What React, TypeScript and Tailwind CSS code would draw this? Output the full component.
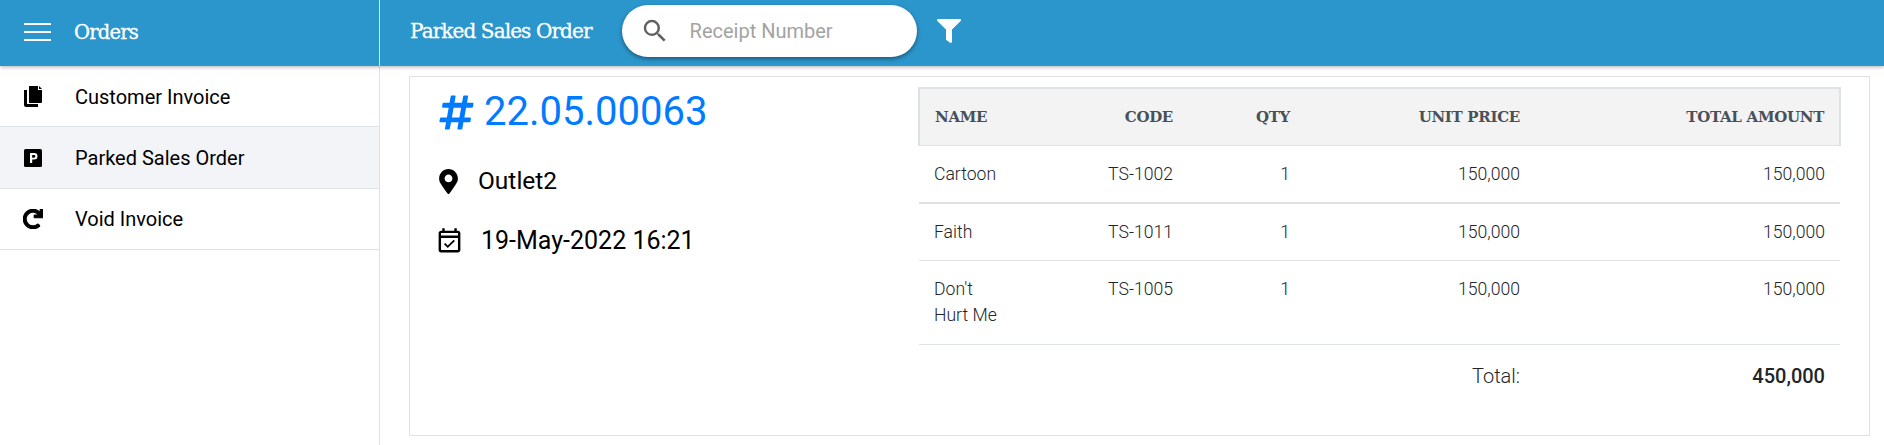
import { FaFilter, FaHashtag, FaMapMarkerAlt, FaRedo } from "react-icons/fa";
import { MdOutlineEventAvailable, MdSearch } from "react-icons/md";

const SLAB = "font-['DejaVu_Serif',serif]";

const CopyIcon = () => (
  <svg width="18" height="21" viewBox="0 0 18 21" fill="currentColor">
    <path d="M0 4h3v14h11v3H2a2 2 0 0 1-2-2z" />
    <path d="M5 0h9v4h4v12a1 1 0 0 1-1 1H5z" />
    <path d="M15 0l3 3h-3z" />
  </svg>
);

const ParkingIcon = () => (
  <svg width="18" height="18" viewBox="0 0 18 18">
    <rect width="18" height="18" rx="1.5" fill="currentColor" />
    <path d="M6 4h4.2a3.2 3.2 0 0 1 0 6.6H8.2V14H6zM8.2 6v2.7h1.8a1.35 1.35 0 0 0 0-2.7z" fill="#fff" fillRule="evenodd" />
  </svg>
);

const navItems = [
  { label: "Customer Invoice", icon: <CopyIcon />, height: "h-[61px] pt-[1px]", active: false },
  { label: "Parked Sales Order", icon: <ParkingIcon />, height: "h-[62px]", active: true },
  { label: "Void Invoice", icon: <FaRedo size={20} className="[stroke-width:30]" />, height: "h-[61px]", active: false },
];

const rows = [
  { name: "Cartoon", code: "TS-1002", border: "border-b-2" },
  { name: "Faith", code: "TS-1011", border: "border-b" },
  { name: "Don't Hurt Me", code: "TS-1005", border: "border-b h-[84px]" },
];

const headCell = "px-[15px] py-0 text-right font-bold";
const bodyCell = "px-[15px] pt-[15px] pb-[15px] align-top";

const App = () => {
  return (
    <div className="h-[445px] w-[1884px] overflow-hidden bg-white font-['Roboto',sans-serif]">
      <header className="relative z-10 flex h-[66px] bg-[#2b96cc] text-white shadow-[0_1px_4px_rgba(0,0,0,0.3)]">
        <div className="flex w-[380px] items-center border-r border-[#d9e6ee]">
          <div className="-mt-[2px] ml-[24px] flex w-[27px] flex-col gap-[6px]">
            <span className="h-[2px] bg-white" />
            <span className="h-[2px] bg-white" />
            <span className="h-[2px] bg-white" />
          </div>
          <span className={`ml-[23px] text-[19.5px] tracking-[-0.8px] [-webkit-text-stroke:0.3px] ${SLAB}`}>Orders</span>
        </div>
        <div className="flex items-center pb-[4px]">
          <span className={`ml-[30px] text-[20px] tracking-[-0.9px] [-webkit-text-stroke:0.3px] ${SLAB}`}>Parked Sales Order</span>
          <div className="ml-[30px] flex h-[52px] w-[295px] items-center rounded-full bg-white shadow-[0_2px_4px_rgba(0,0,0,0.4)]">
            <MdSearch size={30} className="ml-[18px] text-[#616161]" />
            <span className="ml-[20px] text-[20px] text-[#a3a3a3]">Receipt Number</span>
          </div>
          <FaFilter size={24} className="ml-[20px]" />
        </div>
      </header>

      <div className="flex h-[379px]">
        <aside className="w-[380px] shrink-0 border-r border-[#dee2e6]">
          {navItems.map((item) => (
            <div
              key={item.label}
              className={`flex ${item.height} items-center border-b border-[#dee2e6] text-[20px] text-black ${
                item.active ? "bg-[#f3f4f8]" : "bg-white"
              }`}
            >
              <span className="ml-[21px] flex w-[24px] justify-center">{item.icon}</span>
              <span className="ml-[30px]">{item.label}</span>
            </div>
          ))}
        </aside>

        <main className="flex-1 pt-[10px] pl-[29px] pr-[15px]">
          <div className="flex h-[360px] border border-[#dee2e6] pl-[28px] pr-[28px]">
            <div className="w-[480px] shrink-0">
              <div className="mt-[5px] flex items-center text-[40px] leading-[60px] text-[#007bff]">
                <FaHashtag size={39} className="-ml-[1px]" />
                <span className="ml-[8px]">22.05.00063</span>
              </div>
              <div className="mt-[21px] flex items-center text-[24.5px] leading-[36px] text-black">
                <FaMapMarkerAlt size={25} className="-ml-[2px]" />
                <span className="ml-[17px]">Outlet2</span>
              </div>
              <div className="mt-[24px] flex items-center text-[25px] leading-[36px] text-black">
                <MdOutlineEventAvailable size={29} className="-ml-[3px]" />
                <span className="ml-[17px]">19-May-2022 16:21</span>
              </div>
            </div>

            <table className="mt-[10px] h-fit w-[921px] table-fixed border-collapse text-[17.6px] leading-[26px] font-light text-[#212529]">
              <colgroup>
                <col className="w-[100px]" />
                <col className="w-[169px]" />
                <col className="w-[117px]" />
                <col className="w-[230px]" />
                <col className="w-[305px]" />
              </colgroup>
              <thead>
                <tr className={`h-[57px] border-2 border-[#dee2e6] border-b bg-[#f3f3f3] text-[15px] tracking-[-0.3px] text-[#495057] ${SLAB}`}>
                  <th className="px-[15px] py-0 text-left font-bold">NAME</th>
                  <th className={headCell}>CODE</th>
                  <th className={headCell}>QTY</th>
                  <th className={headCell}>UNIT PRICE</th>
                  <th className={headCell}>TOTAL AMOUNT</th>
                </tr>
              </thead>
              <tbody>
                {rows.map((row) => (
                  <tr key={row.code} className={`${row.border} border-[#dee2e6]`}>
                    <td className={`${bodyCell} text-left`}>{row.name}</td>
                    <td className={`${bodyCell} text-right`}>{row.code}</td>
                    <td className={`${bodyCell} text-right`}>1</td>
                    <td className={`${bodyCell} text-right`}>150,000</td>
                    <td className={`${bodyCell} text-right`}>150,000</td>
                  </tr>
                ))}
                <tr>
                  <td colSpan={4} className="px-[15px] pt-[18px] text-right text-[20px]">Total:</td>
                  <td className="px-[15px] pt-[18px] text-right text-[20px] font-medium">450,000</td>
                </tr>
              </tbody>
            </table>
          </div>
        </main>
      </div>
    </div>
  );
};

export default App;
